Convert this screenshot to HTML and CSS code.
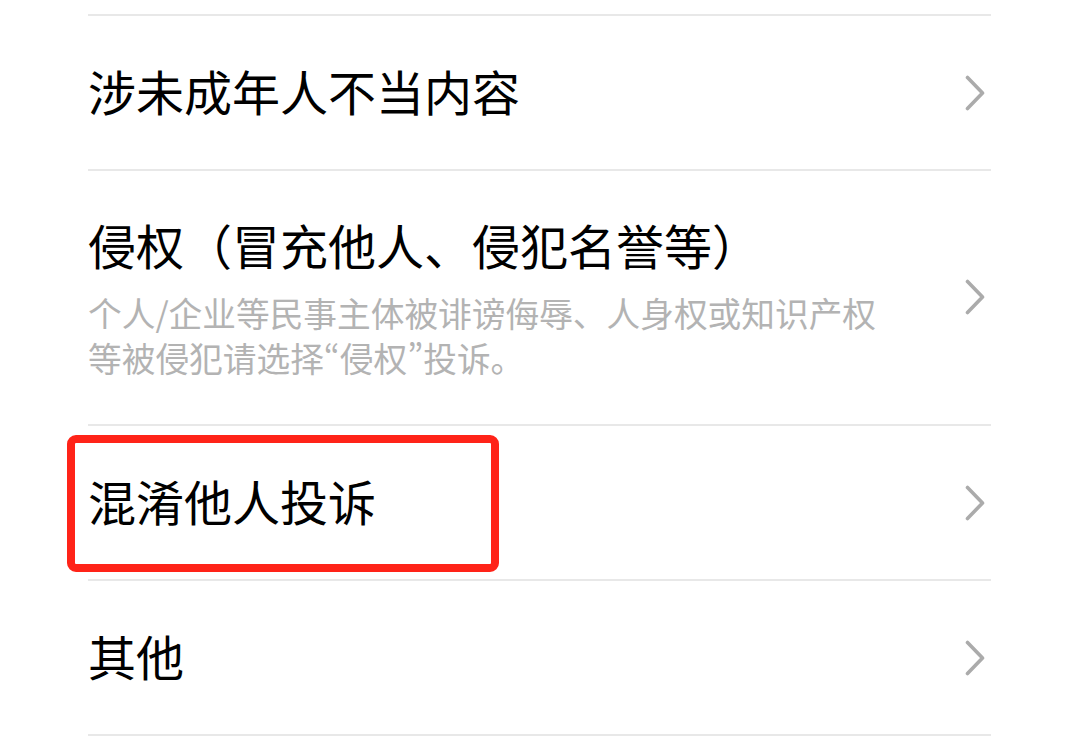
FILE: index.html
```html
<!DOCTYPE html>
<html lang="zh-CN">
<head>
<meta charset="utf-8">
<title>投诉类型</title>
<link rel="stylesheet" href="styles.css">
</head>
<body>
<ul class="list">
  <li class="row">
    <div class="text"><div class="title">涉未成年人不当内容</div></div>
    <svg class="chev" viewBox="0 0 20 36" aria-hidden="true"><polyline points="2.5,2.5 17.5,18 2.5,33.5"/></svg>
  </li>
  <li class="row tall">
    <div class="text">
      <div class="title">侵权（冒充他人、侵犯名誉等）</div>
      <div class="desc">个人/企业等民事主体被诽谤侮辱、人身权或知识产权等被侵犯请选择“侵权”投诉。</div>
    </div>
    <svg class="chev" viewBox="0 0 20 36" aria-hidden="true"><polyline points="2.5,2.5 17.5,18 2.5,33.5"/></svg>
  </li>
  <li class="row marked">
    <div class="text"><div class="title">混淆他人投诉</div></div>
    <svg class="chev" viewBox="0 0 20 36" aria-hidden="true"><polyline points="2.5,2.5 17.5,18 2.5,33.5"/></svg>
    <span class="highlight"></span>
  </li>
  <li class="row">
    <div class="text"><div class="title">其他</div></div>
    <svg class="chev" viewBox="0 0 20 36" aria-hidden="true"><polyline points="2.5,2.5 17.5,18 2.5,33.5"/></svg>
  </li>
</ul>
</body>
</html>
```

FILE: styles.css
```css
html, body {
  margin: 0;
  padding: 0;
  background: #ffffff;
}

body {
  font-family: "Noto Sans CJK SC", "Noto Sans", sans-serif;
  color: #000000;
  width: 1080px;
  height: 749px;
  overflow: hidden;
}

.list {
  list-style: none;
  margin: 14px 0 0 88px;
  padding: 0;
  width: 903px;
  border-top: 2px solid #e8e8e8;
}

.row {
  position: relative;
  display: flex;
  align-items: center;
  min-height: 153px;
  border-bottom: 2px solid #e8e8e8;
}

.row.tall {
  padding: 43px 0 44px;
  min-height: 0;
  height: 166px;
}

.text {
  flex: 1;
  min-width: 0;
  padding-right: 77px;
}

.title {
  font-size: 48px;
  line-height: 60px;
  margin-bottom: 6px;
  color: #000000;
  white-space: nowrap;
}

.tall .title {
  margin-bottom: 0;
}

.desc {
  margin-top: 16px;
  font-size: 33.7px;
  line-height: 45px;
  color: #b3b3b3;
  font-variant-east-asian: proportional-width;
}

.chev {
  flex: none;
  width: 20px;
  height: 36px;
  margin-right: 6px;
  fill: none;
  stroke: #ababab;
  stroke-width: 3.6;
  stroke-linecap: round;
  stroke-linejoin: round;
}

.highlight {
  position: absolute;
  left: -21px;
  top: 9px;
  width: 432px;
  height: 137px;
  box-sizing: border-box;
  border: 8px solid #ff2318;
  border-radius: 9px;
  pointer-events: none;
}
```
